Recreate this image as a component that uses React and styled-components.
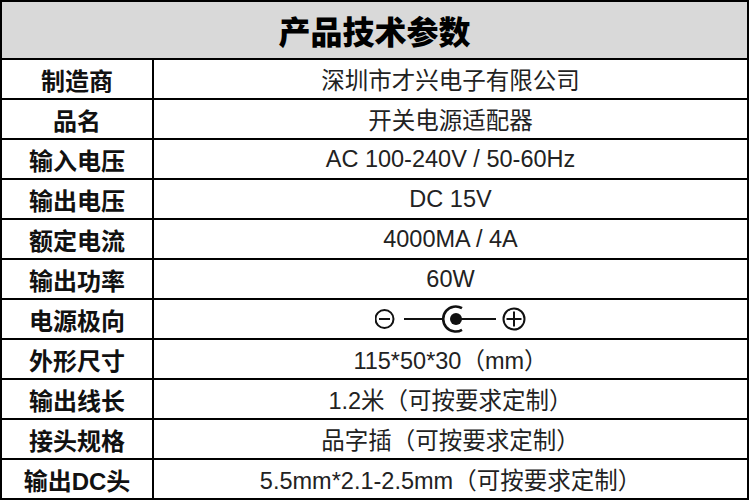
import React from 'react';
import styled, { createGlobalStyle } from 'styled-components';

const GlobalStyle = createGlobalStyle`
  html, body {
    margin: 0;
    padding: 0;
    background: #fff;
  }
`;

const Table = styled.div`
  width: 749px;
  height: 500px;
  box-sizing: border-box;
  display: grid;
  grid-template-columns: 150px 1fr;
  grid-template-rows: 56px repeat(11, 38px);
  gap: 2px;
  padding: 2px;
  background: #000;
  font-family: "Liberation Sans", "Noto Sans CJK SC", sans-serif;
`;

const Header = styled.div`
  grid-column: 1 / -1;
  background: #d9d9d9;
  display: flex;
  align-items: center;
  justify-content: center;
  font-size: 32px;
  font-weight: 900;
  color: #000;
`;

const Cell = styled.div`
  background: #fff;
  display: flex;
  align-items: center;
  justify-content: center;
  white-space: nowrap;
  color: ${(p) => (p.$label ? '#111' : '#222')};
  font-size: ${(p) => (p.$label ? '24px' : '23.5px')};
  font-weight: ${(p) => (p.$label ? 700 : 400)};
`;

const Polarity = () => (
  <svg width="152" height="30" viewBox="0 0 152 30" fill="none" stroke="#111" strokeWidth="2">
    {/* minus */}
    <circle cx="9.5" cy="15" r="9" />
    <line x1="4" y1="15" x2="15" y2="15" />
    <line x1="29" y1="15" x2="68" y2="15" />
    {/* barrel */}
    <path d="M 87 4.2 A 12.5 12.5 0 1 0 87 25.8" strokeWidth="2.6" />
    <circle cx="81" cy="15" r="6" fill="#111" stroke="none" />
    <line x1="86" y1="15" x2="121" y2="15" />
    {/* plus */}
    <circle cx="139" cy="15" r="10.5" />
    <line x1="131.5" y1="15" x2="146.5" y2="15" />
    <line x1="139" y1="7.5" x2="139" y2="22.5" />
  </svg>
);

const rows = [
  ['制造商', '深圳市才兴电子有限公司'],
  ['品名', '开关电源适配器'],
  ['输入电压', 'AC 100-240V / 50-60Hz'],
  ['输出电压', 'DC 15V'],
  ['额定电流', '4000MA / 4A'],
  ['输出功率', '60W'],
  ['电源极向', <Polarity key="p" />],
  ['外形尺寸', '115*50*30（mm）'],
  ['输出线长', '1.2米（可按要求定制）'],
  ['接头规格', '品字插（可按要求定制）'],
  ['输出DC头', '5.5mm*2.1-2.5mm（可按要求定制）'],
];

const App = () => {
  return (
    <>
      <GlobalStyle />
      <Table>
        <Header>产品技术参数</Header>
        {rows.map(([label, value]) => (
          <React.Fragment key={label}>
            <Cell $label>{label}</Cell>
            <Cell>{value}</Cell>
          </React.Fragment>
        ))}
      </Table>
    </>
  );
};

export default App;
